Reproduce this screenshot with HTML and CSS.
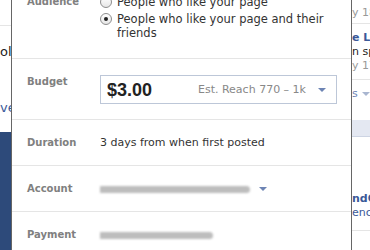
FILE: index.html
```html
<!DOCTYPE html>
<html lang="en">

<head>
    <meta charset="UTF-8">
    <meta name="viewport" content="width=device-width, initial-scale=1.0">
    <title>Promote Post</title>
    <link rel="stylesheet" href="styles.css">
</head>

<body>

    <div class="page">
        <div class="side-left">
            <div class="left-top"></div>
            <div class="left-text">ol</div>
            <div class="left-link">ve</div>
            <div class="left-nav"></div>
        </div>
        <div class="page-main"></div>
        <div class="side-right">
            <div class="feed-item top">
                <div class="feed-meta">y 18</div>
            </div>
            <div class="feed-item">
                <div class="feed-name">e Le</div>
                <div class="feed-text">n sp</div>
                <div class="feed-meta">y 17</div>
            </div>
            <div class="feed-more">s <span class="caret"></span></div>
            <div class="feed-band"></div>
            <div class="feed-item low">
                <div class="feed-name">ndG</div>
                <div class="feed-sub">enc</div>
            </div>
        </div>
    </div>

    <div class="dialog">
        <div class="row">
            <div class="label">Audience</div>
            <div class="value">
                <div class="radio"><span class="radio-box"></span><span>People who like your page</span></div>
                <div class="radio"><span class="radio-box checked"></span><span>People who like your page and their friends</span></div>
            </div>
        </div>
        <div class="row">
            <div class="label">Budget</div>
            <div class="value">
                <div class="budget-select">
                    <span class="budget-amount">$3.00</span>
                    <span class="budget-reach">Est. Reach 770 – 1k</span>
                    <span class="caret"></span>
                </div>
            </div>
        </div>
        <div class="row">
            <div class="label">Duration</div>
            <div class="value">3 days from when first posted</div>
        </div>
        <div class="row">
            <div class="label">Account</div>
            <div class="value value-inline">
                <span class="blurred account-name"></span>
                <span class="caret"></span>
            </div>
        </div>
        <div class="row">
            <div class="label">Payment</div>
            <div class="value value-inline">
                <span class="blurred payment-name"></span>
            </div>
        </div>
    </div>

</body>

</html>
```

FILE: styles.css
```css
:root {
    --label-color: #808080;
    --text-color: #333;
    --line-color: #e5e5e5;
    --fb-blue: #3b5998;
    --caret-color: #6d84b4;
}

body {
    margin: 0;
    font-family: "DejaVu Sans", sans-serif;
    font-size: 11px;
    line-height: 14px;
    color: var(--text-color);
    background-color: #fff;
    overflow: hidden;
}

.page {
    display: flex;
    height: 250px;
}

.side-left {
    width: 11px;
    display: flex;
    flex-direction: column;
    overflow: hidden;
    flex-shrink: 0;
}

.left-top {
    height: 25px;
    border-bottom: 1px solid var(--line-color);
    flex-shrink: 0;
}

.left-text {
    margin-top: 19px;
    font-size: 13px;
    color: #222;
    white-space: nowrap;
}

.left-link {
    margin-top: 42px;
    font-size: 13px;
    color: var(--fb-blue);
    white-space: nowrap;
}

.left-nav {
    margin-top: 17px;
    flex: 1;
    background-color: #2d4a7a;
}

.page-main {
    flex: 1;
}

.side-right {
    width: 18px;
    flex-shrink: 0;
    display: flex;
    flex-direction: column;
    overflow: hidden;
    font-size: 11px;
    white-space: nowrap;
}

.feed-item {
    display: flex;
    flex-direction: column;
    border-bottom: 1px solid var(--line-color);
    padding: 4px 0 6px;
}

.feed-item.top {
    padding-top: 6px;
    padding-bottom: 3px;
}

.feed-meta {
    color: #999;
}

.feed-name {
    color: var(--fb-blue);
    font-weight: bold;
    margin-top: 3px;
}

.feed-text {
    color: #222;
}

.feed-more {
    padding-top: 7px;
    color: #6d84b4;
    height: 33px;
}

.feed-more .caret {
    display: inline-block;
    margin-left: 1px;
    vertical-align: middle;
    border-top-color: #a9b6d0;
}

.feed-band {
    height: 16px;
    background-color: #e4e8f2;
    border-bottom: 1px solid #cdd4e3;
    flex-shrink: 0;
}

.feed-item.low {
    margin-top: 48px;
    padding-bottom: 10px;
}

.feed-sub {
    color: #3b5998;
}

.dialog {
    position: absolute;
    top: -21px;
    left: 11px;
    width: 341px;
    box-sizing: border-box;
    background-color: #fff;
    border-left: 1px solid #666;
    border-right: 1px solid #666;
}

.row {
    display: flex;
    padding: 16px 15px 15px 15px;
    border-top: 1px solid var(--line-color);
}

.row:first-child {
    border-top: none;
}

.label {
    width: 73px;
    flex-shrink: 0;
    font-size: 10px;
    font-weight: bold;
    color: var(--label-color);
}

.value {
    flex: 1;
}

.value-inline {
    display: flex;
    align-items: center;
    height: 14px;
}

.radio {
    display: flex;
    align-items: flex-start;
    margin-bottom: 3px;
    font-size: 11.5px;
}

.radio-box {
    width: 12px;
    height: 12px;
    margin: 1px 5px 0 0;
    flex-shrink: 0;
    border: 1px solid #8d8d8d;
    border-radius: 50%;
    background: linear-gradient(#fff, #e6e6e6);
    box-sizing: border-box;
    display: flex;
    align-items: center;
    justify-content: center;
}

.radio-box.checked::after {
    content: "";
    width: 4px;
    height: 4px;
    border-radius: 50%;
    background-color: #222;
}

.budget-select {
    display: flex;
    align-items: center;
    height: 29px;
    padding: 0 10px 0 6px;
    border: 1px solid #bdc7d8;
    box-sizing: border-box;
    margin-right: -1px;
}

.budget-amount {
    font-family: "Liberation Sans", Arial, sans-serif;
    font-size: 18px;
    font-weight: bold;
    color: #222;
}

.budget-reach {
    margin-left: auto;
    margin-right: 12px;
    color: #888;
}

.caret {
    width: 0;
    height: 0;
    border-left: 4px solid transparent;
    border-right: 4px solid transparent;
    border-top: 4px solid var(--caret-color);
}

.blurred {
    display: block;
    height: 7px;
    background-color: #bdbdbd;
    filter: blur(0.8px);
    border-radius: 1px 4px 4px 1px;
}

.account-name {
    width: 150px;
    margin-right: 9px;
}

.payment-name {
    width: 113px;
}
```
